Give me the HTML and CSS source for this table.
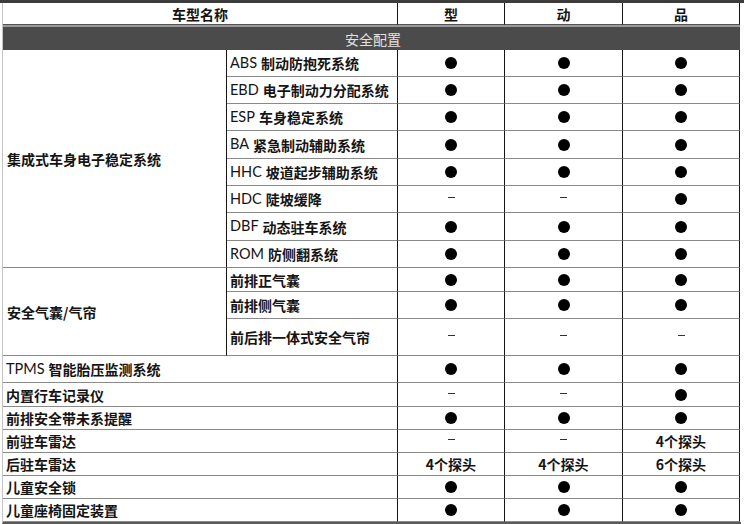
FILE: index.html
```html
<!DOCTYPE html>
<html lang="zh-CN">
<head>
<meta charset="utf-8">
<title>安全配置</title>
<link rel="stylesheet" href="styles.css">
</head>
<body>
<div class="sheet">
  <div class="cell head span2">车型名称</div>
  <div class="cell head c">型</div>
  <div class="cell head c">动</div>
  <div class="cell head c">品</div>

  <div class="cell section">安全配置</div>

  <div class="cell group g8">集成式车身电子稳定系统</div>
  <div class="cell"><span class="lat">ABS</span>制动防抱死系统</div>
  <div class="cell c"><i class="dot"></i></div><div class="cell c"><i class="dot"></i></div><div class="cell c"><i class="dot"></i></div>
  <div class="cell"><span class="lat">EBD</span>电子制动力分配系统</div>
  <div class="cell c"><i class="dot"></i></div><div class="cell c"><i class="dot"></i></div><div class="cell c"><i class="dot"></i></div>
  <div class="cell"><span class="lat">ESP</span>车身稳定系统</div>
  <div class="cell c"><i class="dot"></i></div><div class="cell c"><i class="dot"></i></div><div class="cell c"><i class="dot"></i></div>
  <div class="cell"><span class="lat">BA</span>紧急制动辅助系统</div>
  <div class="cell c"><i class="dot"></i></div><div class="cell c"><i class="dot"></i></div><div class="cell c"><i class="dot"></i></div>
  <div class="cell"><span class="lat">HHC</span>坡道起步辅助系统</div>
  <div class="cell c"><i class="dot"></i></div><div class="cell c"><i class="dot"></i></div><div class="cell c"><i class="dot"></i></div>
  <div class="cell"><span class="lat">HDC</span>陡坡缓降</div>
  <div class="cell c"><i class="dash"></i></div><div class="cell c"><i class="dash"></i></div><div class="cell c"><i class="dot"></i></div>
  <div class="cell"><span class="lat">DBF</span>动态驻车系统</div>
  <div class="cell c"><i class="dot"></i></div><div class="cell c"><i class="dot"></i></div><div class="cell c"><i class="dot"></i></div>
  <div class="cell"><span class="lat">ROM</span>防侧翻系统</div>
  <div class="cell c"><i class="dot"></i></div><div class="cell c"><i class="dot"></i></div><div class="cell c"><i class="dot"></i></div>

  <div class="cell group g3">安全气囊/气帘</div>
  <div class="cell">前排正气囊</div>
  <div class="cell c"><i class="dot"></i></div><div class="cell c"><i class="dot"></i></div><div class="cell c"><i class="dot"></i></div>
  <div class="cell">前排侧气囊</div>
  <div class="cell c"><i class="dot"></i></div><div class="cell c"><i class="dot"></i></div><div class="cell c"><i class="dot"></i></div>
  <div class="cell">前后排一体式安全气帘</div>
  <div class="cell c"><i class="dash"></i></div><div class="cell c"><i class="dash"></i></div><div class="cell c"><i class="dash"></i></div>

  <div class="cell span2"><span class="lat">TPMS</span>智能胎压监测系统</div>
  <div class="cell c"><i class="dot"></i></div><div class="cell c"><i class="dot"></i></div><div class="cell c"><i class="dot"></i></div>
  <div class="cell span2">内置行车记录仪</div>
  <div class="cell c"><i class="dash"></i></div><div class="cell c"><i class="dash"></i></div><div class="cell c"><i class="dot"></i></div>
  <div class="cell span2">前排安全带未系提醒</div>
  <div class="cell c"><i class="dot"></i></div><div class="cell c"><i class="dot"></i></div><div class="cell c"><i class="dot"></i></div>
  <div class="cell span2">前驻车雷达</div>
  <div class="cell c"><i class="dash"></i></div><div class="cell c"><i class="dash"></i></div><div class="cell c">4个探头</div>
  <div class="cell span2">后驻车雷达</div>
  <div class="cell c">4个探头</div><div class="cell c">4个探头</div><div class="cell c">6个探头</div>
  <div class="cell span2">儿童安全锁</div>
  <div class="cell c"><i class="dot"></i></div><div class="cell c"><i class="dot"></i></div><div class="cell c"><i class="dot"></i></div>
  <div class="cell span2">儿童座椅固定装置</div>
  <div class="cell c"><i class="dot"></i></div><div class="cell c"><i class="dot"></i></div><div class="cell c"><i class="dot"></i></div>
</div>
</body>
</html>
```

FILE: styles.css
```css
html, body {
  margin: 0;
  padding: 0;
  background: #ffffff;
}

body {
  width: 744px;
  height: 524px;
  overflow: hidden;
  border-top: 3px solid #3c3c3c;
  box-sizing: border-box;
  font-family: "Noto Sans CJK SC", "Noto Sans", sans-serif;
  font-size: 14px;
  font-weight: 700;
  color: #141414;
}

.sheet {
  margin-left: 2px;
  width: 738px;
  display: grid;
  grid-template-columns: 224px 171px 107px 118px 117px;
  grid-template-rows: 22px 25px 27px 27px 27px 28px 27px 27px 28px 27px 24px 27px 37px 27px 24px 23px 23px 23px 23px 23px;
  border-left: 1px solid #c4c4c4;
  border-bottom: 2px solid #5a5a5a;
}

.cell {
  box-sizing: border-box;
  border-right: 1px solid #161616;
  border-bottom: 1px solid #8a8a8a;
  display: flex;
  align-items: center;
  padding-left: 3px;
  white-space: nowrap;
  line-height: 1;
}

.c {
  justify-content: center;
  padding-left: 0;
}

.head {
  justify-content: center;
  padding-left: 0;
  border-bottom-color: #555;
}

.span2 {
  grid-column: span 2;
}

.section {
  grid-column: span 5;
  justify-content: center;
  background: #4b4b4b;
  color: #e2e2e2;
  font-weight: 400;
  border-top: 2px solid #9a9a9a;
  border-bottom: 0;
  border-right: 0;
}

.group {
  grid-column: 1;
  padding-left: 4px;
}

.g8 { grid-row: span 8; }
.g3 { grid-row: span 3; }

.lat {
  font-family: "Lato", "Noto Sans", sans-serif;
  font-size: 14.5px;
  font-weight: 400;
  margin-right: 4px;
}

.dot {
  display: block;
  width: 12px;
  height: 12px;
  border-radius: 50%;
  background: #000;
}

.dash {
  display: block;
  width: 7px;
  height: 1px;
  background: #333;
  margin-top: -3px;
}
```
